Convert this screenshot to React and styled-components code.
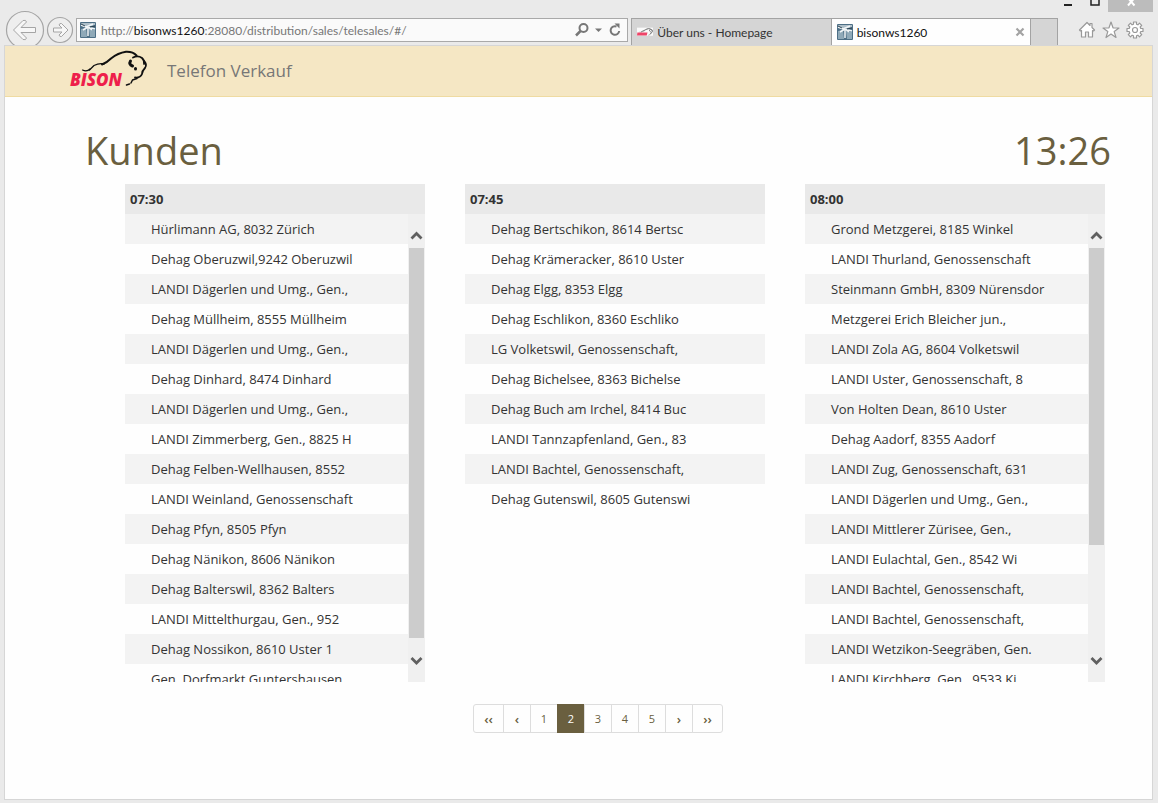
import React, { useState } from "react";
import styled, { createGlobalStyle } from "styled-components";

const Global = createGlobalStyle`
  *, *::before, *::after { box-sizing: border-box; }
  body { margin: 0; background: #eaeaea; color: #333; font-family: "Open Sans", "Noto Sans", sans-serif; font-size: 13px; }
  button { font: inherit; color: inherit; background: none; border: 0; padding: 0; cursor: pointer; }
  svg { display: block; flex: none; }
`;

const Window = styled.div`
  min-height: 100vh;
  display: flex;
  flex-direction: column;
`;

/* Browser chrome */
const TitleBar = styled.div`
  height: 12px;
  display: flex;
  justify-content: flex-end;
  padding-right: 5px;
`;
const WindowButton = styled.button`
  width: ${p => (p.$close ? 45 : 27)}px;
  height: 12px;
  display: flex;
  justify-content: center;
  background: ${p => (p.$close ? "#bcbcbc" : "transparent")};
`;
const NavBar = styled.div`
  height: 33px;
  display: flex;
  align-items: flex-start;
  padding-left: 5px;
  font-family: "Lato", sans-serif;
  font-size: 12px;
`;
const HistoryButton = styled.button`
  height: 35px;
  margin-top: -2px;
  margin-right: ${p => p.$gap}px;
`;
const Address = styled.form`
  flex: 549 1 0;
  min-width: 0;
  height: 24px;
  margin: 6px 3px 0 0;
  padding: 0 5px 0 3px;
  display: flex;
  align-items: center;
  gap: 5px;
  border: 1px solid #a9a9a9;
  background: #fafafa;
`;
const Url = styled.button`
  flex: 1;
  min-width: 0;
  overflow: hidden;
  white-space: nowrap;
  text-align: left;
  color: #777;
`;
const Host = styled.span`color: #111;`;
const UrlInput = styled.input`
  flex: 1;
  min-width: 0;
  border: 0;
  outline: 0;
  background: transparent;
  font: inherit;
`;
const Tabs = styled.div`
  flex: 430 1 0;
  min-width: 0;
  height: 27px;
  margin-top: 6px;
  display: flex;
  border: 1px solid #a3a3a3;
  border-bottom: 0;
`;
const Tab = styled.div`
  flex: 1;
  min-width: 0;
  display: flex;
  align-items: center;
  padding: 0 5px;
  background: ${p => (p.$active ? "#fefefe" : "#d5d5d5")};
  color: ${p => (p.$active ? "#111" : "#333")};
  border-right: 1px solid #a3a3a3;
`;
const TabLabel = styled.button`
  flex: 1;
  display: flex;
  align-items: center;
  gap: 4px;
  min-width: 0;
  white-space: nowrap;
  overflow: hidden;
`;
const NewTab = styled.button`
  width: 26px;
  background: #d5d5d5;
`;
const Tools = styled.div`
  width: 100px;
  padding: 9px 0 0 20px;
  display: flex;
  gap: 6px;
`;

/* Page */
const Page = styled.div`
  flex: 1;
  margin: 0 5px 3px 4px;
  border: 1px solid #d6d6d6;
  background: #fefefe;
`;
const Header = styled.header`
  height: 51px;
  display: flex;
  align-items: center;
  gap: 16px;
  padding: 0 0 2px 64px;
  background: #f5e7c4;
  border-bottom: 1px solid #efdba2;
`;
const Brand = styled.a`
  color: #777;
  font-size: 17px;
  text-decoration: none;
`;
const Main = styled.main`padding: 27px 41px 27px 80px;`;
const Heading = styled.div`
  display: flex;
  justify-content: space-between;
  margin-bottom: 8px;
  color: #6a5f3f;
  font-size: 38px;
  line-height: 52px;
`;
const Title = styled.h1`
  margin: 0;
  font: inherit;
`;
const Columns = styled.div`
  display: grid;
  grid-template-columns: repeat(3, 1fr);
  gap: 40px;
  padding: 0 6px 0 40px;
`;
const Slot = styled.section`min-width: 0;`;
const SlotTime = styled.h2`
  margin: 0;
  padding-left: 5px;
  background: #e9e9e9;
  font-size: 13px;
  font-weight: 700;
  line-height: 30px;
`;
const SlotBody = styled.div`
  height: 468px;
  display: flex;
  overflow: hidden;
`;
const Customers = styled.ul`
  flex: 1;
  min-width: 0;
  margin: 0;
  padding: 0;
  list-style: none;
`;
const Customer = styled.li`
  padding-left: 26px;
  line-height: 30px;
  white-space: nowrap;
  &:nth-child(odd) { background: #f3f3f3; }
`;
const ScrollBar = styled.div`
  width: 17px;
  padding: 14px 1px 12px;
  display: flex;
  flex-direction: column;
  background: #f0f0f0;
`;
const ScrollTrack = styled.div`flex: 1;`;
const ScrollThumb = styled.div`
  height: ${p => p.$size}%;
  background: #cccccc;
`;
const ArrowButton = styled.button`
  flex: none;
  height: 20px;
  display: flex;
  align-items: ${p => (p.$down ? "flex-end" : "flex-start")};
  justify-content: center;
`;
const Pagination = styled.nav`
  display: flex;
  justify-content: center;
  margin-top: 22px;
`;
const PageButton = styled.button`
  width: ${p => (p.$wide ? 31 : 28)}px;
  height: 29px;
  margin-left: -1px;
  border: 1px solid ${p => (p.$current ? "#6a5f3f" : "#dddddd")};
  background: ${p => (p.$current ? "#6a5f3f" : "#fefefe")};
  color: ${p => (p.$current ? "#ffffff" : "#6a5f3f")};
  font-size: ${p => (p.$step ? 13 : 11)}px;
  font-weight: ${p => (p.$step ? 600 : 400)};
  line-height: 20px;
  &:first-child { margin-left: 0; border-radius: 3px 0 0 3px; }
  &:last-child { border-radius: 0 3px 3px 0; }
`;

const Arrow = ({ size, r }) => (
  <svg width={size} height="35" viewBox={`0 0 ${size} 35`} fill="#f7f7f7" stroke="#a5a5a5" strokeLinejoin="round">
    <circle cx={size / 2} cy="20" r={r} fill="#eeeeee" strokeWidth="1.2" />
    {r > 15
      ? <path d="M8.5 20 L18 10.5 Q21 9.500 21.500 12 L16 17.500 H30.500 V22.500 H16 L21.500 28 Q21 30.500 18 29.500 Z" />
      : <path d="M22 20 L15.500 13.500 Q13.500 13 13 15 L16 18 H7.500 V22 H16 L13 25 Q13.500 27 15.500 26.500 Z" />}
  </svg>
);

const Favicon = () => (
  <svg width="16" height="16" viewBox="0 0 16 16">
    <rect width="16" height="16" rx="1" fill="#4d6f86" />
    <path d="M1 7 L6 6 L7 15 H1 Z M9 7 L15 8 V15 H10 Z" fill="#8fa9b8" />
    <path d="M1 1 H15 V3 L8 5 L1 4 Z" fill="#aebfc9" />
    <path d="M1 3 L6 5 L13 2 M3 8 L8 5 L15 7 M8 5 L12 8 M8 6 V14" stroke="#f2f6f8" strokeWidth="1.500" fill="none" />
    <path d="M1 2 L5 4 M10 5 L15 4" stroke="#29404f" fill="none" />
  </svg>
);

const bisonLines = (
  <g fill="none" stroke="#111" strokeLinecap="round" strokeLinejoin="round">
    <path d="M13.500 20 Q18 22 21 19" strokeWidth="1.200" />
    <path d="M20.500 20 L25 15.500 Q30 13 35 14" strokeWidth="1.300" />
    <path d="M33 14.500 Q38 12.500 42 8.500 Q49 3 57 1.800 Q64 1.500 67.500 5.500" strokeWidth="2" />
    <path d="M64 7.500 Q69 5 73 8 Q76 11 75 14" strokeWidth="1.800" />
    <path d="M75 11 Q78.500 14.500 76 18 Q73 21 73 24 Q71.500 28 66 27.500" strokeWidth="1.800" />
    <path d="M61.500 11 Q59.500 14.500 63.500 16" strokeWidth="3" />
    <path d="M66.500 18.500 V19" strokeWidth="3" />
    <path d="M68 28.500 L63.500 30 L62 33 M60.500 34 L57.500 35" strokeWidth="1.500" />
  </g>
);

const Logo = () => (
  <svg width="82" height="40" viewBox="0 0 82 40" role="img" aria-label="Bison">
    {bisonLines}
    <text x="1" y="36" fill="#ee1f4b" fontFamily="Open Sans, sans-serif" fontStyle="italic" fontWeight="800" fontSize="17">BISON</text>
  </svg>
);

const BisonFavicon = () => (
  <svg width="16" height="16" viewBox="0 0 79 79">
    <rect y="18" width="79" height="40" fill="#fafafa" />
    <g transform="translate(0 20)">
      <g opacity="0.800">{bisonLines}</g>
      <g fill="none" stroke="#777" strokeWidth="4"><path d="M20 20 L42 8 L57 3 L73 8 L75 18 L66 28" /></g>
      <path d="M2 22 H52 L48 37 H0 Z" fill="#ee4568" />
    </g>
  </svg>
);

const slots = [
  {
    time: "07:30", thumb: 97,
    customers: [
      "Hürlimann AG, 8032 Zürich", "Dehag Oberuzwil,9242 Oberuzwil", "LANDI Dägerlen und Umg., Gen.,",
      "Dehag Müllheim, 8555 Müllheim", "LANDI Dägerlen und Umg., Gen.,", "Dehag Dinhard, 8474 Dinhard",
      "LANDI Dägerlen und Umg., Gen.,", "LANDI Zimmerberg, Gen., 8825 H", "Dehag Felben-Wellhausen, 8552",
      "LANDI Weinland, Genossenschaft", "Dehag Pfyn, 8505 Pfyn", "Dehag Nänikon, 8606 Nänikon",
      "Dehag Balterswil, 8362 Balters", "LANDI Mittelthurgau, Gen., 952", "Dehag Nossikon, 8610 Uster 1",
      "Gen. Dorfmarkt Guntershausen",
    ],
  },
  {
    time: "07:45",
    customers: [
      "Dehag Bertschikon, 8614 Bertsc", "Dehag Krämeracker, 8610 Uster", "Dehag Elgg, 8353 Elgg",
      "Dehag Eschlikon, 8360 Eschliko", "LG Volketswil, Genossenschaft,", "Dehag Bichelsee, 8363 Bichelse",
      "Dehag Buch am Irchel, 8414 Buc", "LANDI Tannzapfenland, Gen., 83", "LANDI Bachtel, Genossenschaft,",
      "Dehag Gutenswil, 8605 Gutenswi",
    ],
  },
  {
    time: "08:00", thumb: 74,
    customers: [
      "Grond Metzgerei, 8185 Winkel", "LANDI Thurland, Genossenschaft", "Steinmann GmbH, 8309 Nürensdor",
      "Metzgerei Erich Bleicher jun.,", "LANDI Zola AG, 8604 Volketswil", "LANDI Uster, Genossenschaft, 8",
      "Von Holten Dean, 8610 Uster", "Dehag Aadorf, 8355 Aadorf", "LANDI Zug, Genossenschaft, 631",
      "LANDI Dägerlen und Umg., Gen.,", "LANDI Mittlerer Zürisee, Gen.,", "LANDI Eulachtal, Gen., 8542 Wi",
      "LANDI Bachtel, Genossenschaft,", "LANDI Bachtel, Genossenschaft,", "LANDI Wetzikon-Seegräben, Gen.",
      "LANDI Kirchberg, Gen., 9533 Ki",
    ],
  },
];

const pages = ["‹‹", "‹", "1", "2", "3", "4", "5", "›", "››"];

function AddressBar() {
  const [editing, setEditing] = useState(false);
  return (
    <Address onSubmit={e => e.preventDefault()}>
      <Favicon />
      {editing
        ? <UrlInput aria-label="Adresse" autoFocus defaultValue="http://bisonws1260:28080/distribution/sales/telesales/#/" onBlur={() => setEditing(false)} />
        : <Url type="button" onClick={() => setEditing(true)}>http://<Host>bisonws1260</Host>:28080/distribution/sales/telesales/#/</Url>}
      <button type="submit" aria-label="Suchen">
        <svg width="16" height="16" viewBox="0 0 16 16" fill="none" stroke="#777" strokeWidth="2">
          <circle cx="9.500" cy="6" r="4" />
          <path d="M6.500 9 L2 13.500" strokeWidth="2.500" />
        </svg>
      </button>
      <button type="button" aria-label="Verlauf">
        <svg width="8" height="16" viewBox="0 0 8 16"><path d="M0 6.500 H7 L3.500 10 Z" fill="#777" /></svg>
      </button>
      <button type="button" aria-label="Aktualisieren">
        <svg width="14" height="16" viewBox="0 0 14 16" fill="none" stroke="#777" strokeWidth="2">
          <path d="M8.500 4.500 A4.300 4.300 0 1 0 11.200 9" />
          <path d="M6.500 1.500 H11.500 V6.500 Z" fill="#777" stroke="none" />
        </svg>
      </button>
    </Address>
  );
}

function CustomerSlot({ time, thumb, customers }) {
  return (
    <Slot>
      <SlotTime>{time}</SlotTime>
      <SlotBody>
        <Customers>{customers.map((name, i) => <Customer key={i}>{name}</Customer>)}</Customers>
        {thumb && (
          <ScrollBar>
            <ArrowButton aria-label="Nach oben">
              <svg width="13" height="14" viewBox="0 0 13 14" fill="none" stroke="#606060" strokeWidth="2.800"><path d="M1.500 10.500 L6.500 5.500 L11.500 10.500" /></svg>
            </ArrowButton>
            <ScrollTrack><ScrollThumb $size={thumb} /></ScrollTrack>
            <ArrowButton $down aria-label="Nach unten">
              <svg width="13" height="14" viewBox="0 0 13 14" fill="none" stroke="#606060" strokeWidth="2.800"><path d="M1.500 2 L6.500 7 L11.500 2" /></svg>
            </ArrowButton>
          </ScrollBar>
        )}
      </SlotBody>
    </Slot>
  );
}

export default function App() {
  const [current, setCurrent] = useState("2");
  return (
    <Window>
      <Global />
      <TitleBar>
        <WindowButton aria-label="Minimieren"><svg width="8" height="12"><path d="M0 5 H8" stroke="#222" strokeWidth="2" /></svg></WindowButton>
        <WindowButton aria-label="Maximieren"><svg width="10" height="12"><path d="M1 0 V5 H9 V0" fill="none" stroke="#222" strokeWidth="1.500" /></svg></WindowButton>
        <WindowButton $close aria-label="Schliessen"><svg width="10" height="12"><path d="M2 -2 L8.500 5.500 M8.500 -2 L2 5.500" stroke="#fff" strokeWidth="2" /></svg></WindowButton>
      </TitleBar>
      <NavBar>
        <HistoryButton $gap={1} aria-label="Zurück"><Arrow size={40} r={18.5} /></HistoryButton>
        <HistoryButton $gap={2} aria-label="Vorwärts"><Arrow size={28} r={12.5} /></HistoryButton>
        <AddressBar />
        <Tabs>
          <Tab><TabLabel><BisonFavicon />Über uns - Homepage</TabLabel></Tab>
          <Tab $active>
            <TabLabel><Favicon />bisonws1260</TabLabel>
            <button aria-label="Tab schliessen">
              <svg width="10" height="10" viewBox="0 0 10 10"><path d="M1.500 1.500 L8.500 8.500 M8.500 1.500 L1.500 8.500" stroke="#a3a3a3" strokeWidth="2.200" /></svg>
            </button>
          </Tab>
          <NewTab aria-label="Neuer Tab" />
        </Tabs>
        <Tools>
          <button aria-label="Startseite">
            <svg width="18" height="18" viewBox="0 0 18 18" fill="#fff" stroke="#999" strokeWidth="1.200" strokeLinejoin="round">
              <path d="M9 1.500 L1.500 9 L2.500 10 L3.500 9.500 V16 H7.500 V11 H10.500 V16 H14.500 V9.500 L15.500 10 L16.500 9 L14 6.500 V2.500 H12 V4.500 Z" />
            </svg>
          </button>
          <button aria-label="Favoriten">
            <svg width="18" height="18" viewBox="0 0 18 18" fill="#fff" stroke="#999" strokeWidth="1.200" strokeLinejoin="round">
              <path d="M9 1 L11 6.800 L17 7 L12.200 10.600 L14 16.500 L9 13 L4 16.500 L5.800 10.600 L1 7 L7 6.800 Z" />
            </svg>
          </button>
          <button aria-label="Extras">
            <svg width="18" height="18" viewBox="0 0 18 18" fill="#fff" stroke="#999" strokeWidth="1.200" strokeLinejoin="round">
              <path d="M7.500 1 H10.500 V3.200 L11.900 3.800 L13.500 2.200 L15.700 4.400 L14.200 6 L14.800 7.500 H17 V10.500 H14.800 L14.200 12 L15.700 13.600 L13.500 15.800 L11.900 14.200 L10.500 14.800 V17 H7.500 V14.800 L6.100 14.200 L4.500 15.800 L2.300 13.600 L3.800 12 L3.200 10.500 H1 V7.500 H3.200 L3.800 6 L2.300 4.400 L4.500 2.200 L6.100 3.800 L7.500 3.200 Z" />
              <circle cx="9" cy="9" r="2.500" />
            </svg>
          </button>
        </Tools>
      </NavBar>
      <Page>
        <Header>
          <Logo />
          <Brand href="#/">Telefon Verkauf</Brand>
        </Header>
        <Main>
          <Heading>
            <Title>Kunden</Title>
            <time>13:26</time>
          </Heading>
          <Columns>{slots.map(slot => <CustomerSlot key={slot.time} {...slot} />)}</Columns>
          <Pagination aria-label="Seiten">
            {pages.map(label => (
              <PageButton key={label} $wide={label.length > 1} $step={/[‹›]/.test(label)} $current={label === current} onClick={() => setCurrent(label)}>{label}</PageButton>
            ))}
          </Pagination>
        </Main>
      </Page>
    </Window>
  );
}
